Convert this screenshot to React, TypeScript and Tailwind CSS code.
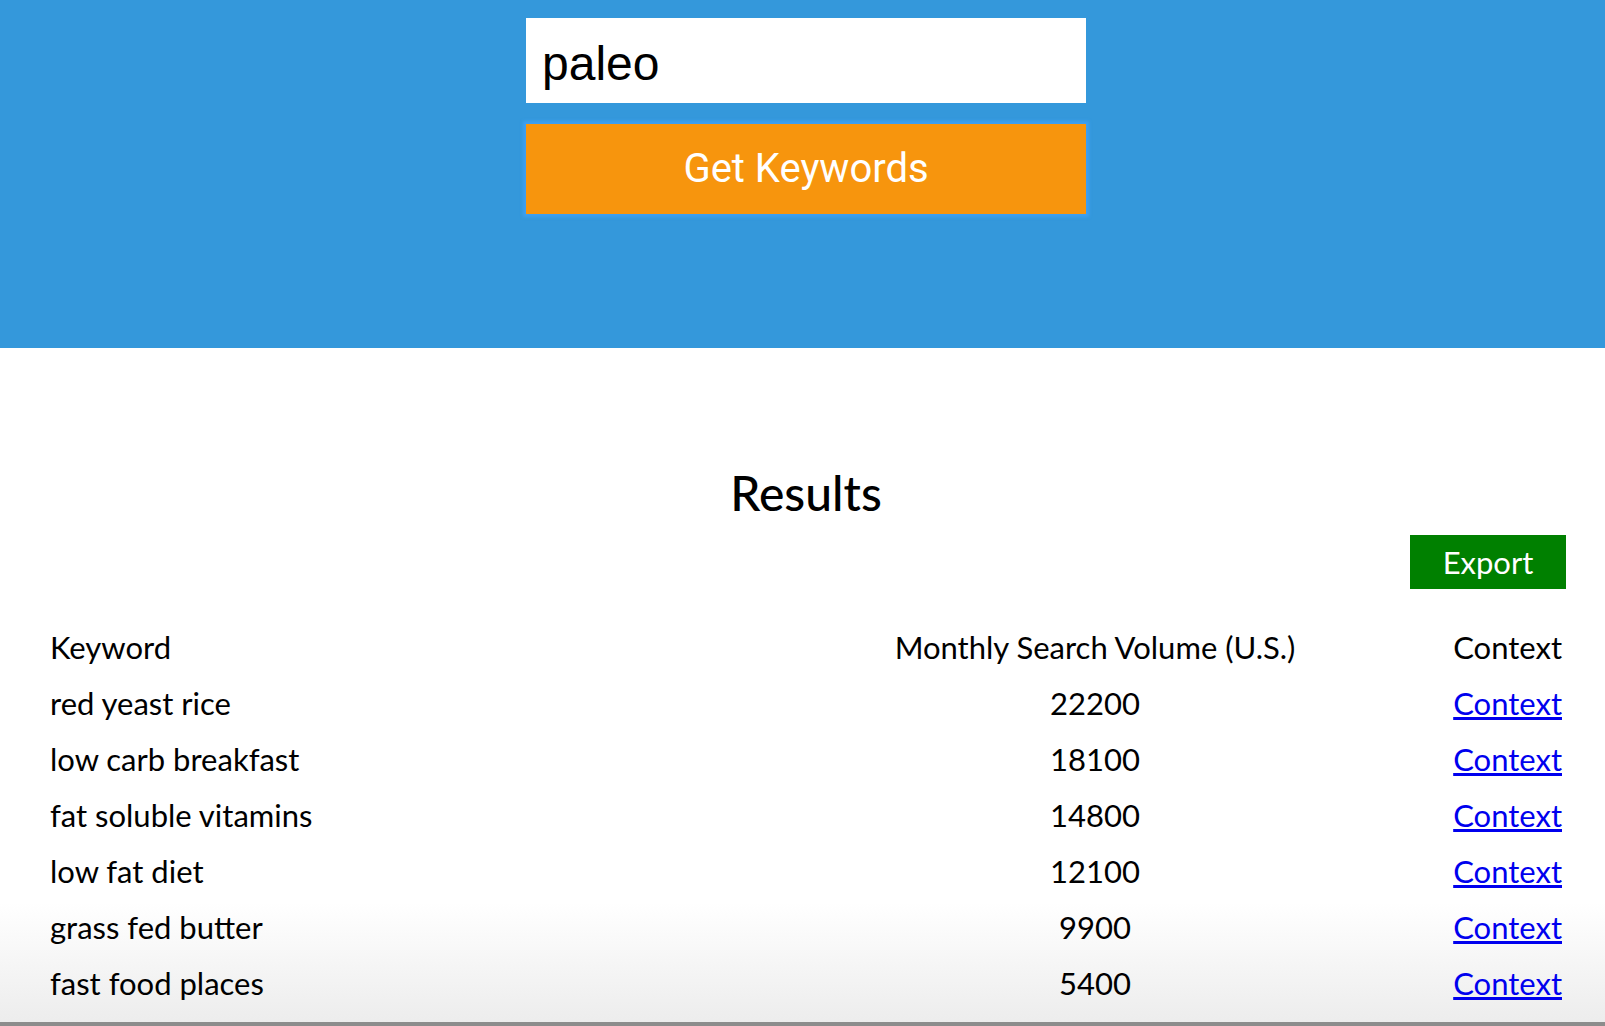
const ROWS = [
  { keyword: 'red yeast rice', volume: 22200 },
  { keyword: 'low carb breakfast', volume: 18100 },
  { keyword: 'fat soluble vitamins', volume: 14800 },
  { keyword: 'low fat diet', volume: 12100 },
  { keyword: 'grass fed butter', volume: 9900 },
  { keyword: 'fast food places', volume: 5400 },
];

export default function App() {
  return (
    <div className="relative h-[1026px] overflow-hidden bg-[linear-gradient(to_bottom,#ffffff_0%,#ffffff_88%,#ececec_100%)] font-['Lato',sans-serif] text-black">
      {/* Search header */}
      <header className="flex h-[348px] justify-center bg-[#3498db] pl-[7px] pt-[18px]">
        <div className="flex w-[560px] flex-col gap-[21px]">
          <input
            readOnly
            value="paleo"
            className="h-[85px] w-full bg-white px-[16px] pt-[6px] font-['Liberation_Sans',Arial,sans-serif] text-[48px] text-black outline-none"
          />
          <button className="h-[90px] w-full bg-[#f7950d] font-['Roboto',sans-serif] text-[40px] text-white shadow-[0_0_3px_3px_#3ea0f2]">
            Get Keywords
          </button>
        </div>
      </header>

      {/* Results */}
      <main className="pt-[115px]">
        <h2 className="pl-[7px] text-center text-[48px] font-medium leading-[60px]">Results</h2>
        <div className="flex justify-end pr-[39px] pt-[12px]">
          <button className="h-[54px] w-[156px] bg-[#008000] text-[31px] text-white">Export</button>
        </div>

        <div className="mt-[30px] grid grid-cols-[844px_402px_266px] pl-[50px] text-[31px] leading-[56px]">
          <div>Keyword</div>
          <div className="text-center">Monthly Search Volume (U.S.)</div>
          <div className="text-right">Context</div>
          {ROWS.map((row) => (
            <div key={row.keyword} className="contents">
              <div>{row.keyword}</div>
              <div className="text-center">{row.volume}</div>
              <div className="text-right">
                <a href="#" className="text-[#0000ee] underline">
                  Context
                </a>
              </div>
            </div>
          ))}
        </div>
      </main>

      {/* window edge */}
      <div className="absolute inset-x-0 bottom-0 h-[4px] bg-[#8c8c8c]" />
    </div>
  );
}
